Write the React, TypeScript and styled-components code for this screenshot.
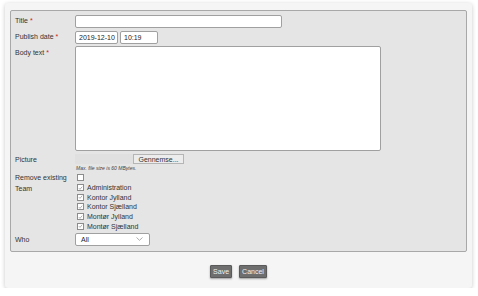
import styled, { createGlobalStyle } from "styled-components";

const GlobalStyle = createGlobalStyle`
  body {
    margin: 0;
    background: #ffffff;
    font-family: "Liberation Sans", Arial, sans-serif;
    color: #333333;
  }
`;

const teams = [
  "Administration",
  "Kontor Jylland",
  "Kontor Sjælland",
  "Montør Jylland",
  "Montør Sjælland",
];

const ChevronDown = () => (
  <svg width="7" height="4" viewBox="0 0 7 4">
    <path d="M0.5 0.5 L3.5 3.3 L6.5 0.5" fill="none" stroke="#999" strokeWidth="0.8" />
  </svg>
);

const CheckMark = () => (
  <svg width="6" height="6" viewBox="0 0 6 6">
    <path d="M1 3.2 L2.4 4.6 L5 1.4" fill="none" stroke="#8a8a8a" strokeWidth="0.8" />
  </svg>
);

const App = () => {
  return (
    <>
      <GlobalStyle />
      <Card>
        <Panel>
          <Label>
            Title <Req>*</Req>
          </Label>
          <TextInput width="207px" />

          <Label>
            Publish date <Req>*</Req>
          </Label>
          <Field>
            <TextInput width="43px" value="2019-12-10" readOnly />
            <TextInput width="38px" value="10:19" readOnly />
          </Field>

          <Label>
            Body text <Req>*</Req>
          </Label>
          <TextArea />

          <Label $pad="2px">Picture</Label>
          <FileCol>
            <FileRow>
              <FileName />
              <BrowseButton>Gennemse...</BrowseButton>
            </FileRow>
            <Hint>Max. file size is 60 MBytes.</Hint>
          </FileCol>

          <Label $pad="0px">Remove existing</Label>
          <Field>
            <CheckBox />
          </Field>

          <Label $pad="1px">Team</Label>
          <TeamList>
            {teams.map((t) => (
              <TeamItem key={t}>
                <CheckBox>
                  <CheckMark />
                </CheckBox>
                <span>{t}</span>
              </TeamItem>
            ))}
          </TeamList>

          <Label $pad="3px">Who</Label>
          <Select>
            <span>All</span>
            <ChevronDown />
          </Select>
        </Panel>
        <Actions>
          <ActionButton>Save</ActionButton>
          <ActionButton>Cancel</ActionButton>
        </Actions>
      </Card>
    </>
  );
};

const Card = styled.div`
  width: 467px;
  height: 285px;
  margin: 3px 0 0 5px;
  box-sizing: border-box;
  background: #f5f5f5;
  border-radius: 3px;
  box-shadow: 0 1px 4px rgba(0, 0, 0, 0.22);
  padding: 7px 5px 0 5px;
  display: flex;
  flex-direction: column;
`;

const Panel = styled.div`
  height: 242px;
  box-sizing: border-box;
  background: #e5e5e5;
  border: 1px solid #a8a8a8;
  border-radius: 2px;
  padding: 4px 4px 0 4px;
  display: grid;
  grid-template-columns: 60px 1fr;
  grid-auto-rows: min-content;
  row-gap: 3px;
  font-size: 7px;
`;

const Label = styled.div<{ $pad?: string }>`
  padding-top: ${({ $pad }) => $pad ?? "2px"};
  font-size: 7px;
  color: #333;
  white-space: nowrap;
`;

const Req = styled.span`
  color: #d42020;
`;

const Field = styled.div`
  display: flex;
  gap: 2px;
  align-items: center;
`;

const TextInput = styled.input<{ width: string }>`
  width: ${({ width }) => width};
  height: 13px;
  box-sizing: border-box;
  border: 1px solid #a0a0a0;
  border-radius: 2px;
  background: #fff;
  padding: 0 1px 0 3px;
  font-family: "Liberation Sans", Arial, sans-serif;
  font-size: 7px;
  color: #222;
  outline: none;
`;

const TextArea = styled.div`
  width: 306px;
  height: 105px;
  box-sizing: border-box;
  border: 1px solid #a0a0a0;
  border-radius: 2px;
  background: #fff;
  margin-top: -1px;
`;

const FileCol = styled.div`
  display: flex;
  flex-direction: column;
  gap: 1px;
`;

const FileRow = styled.div`
  display: flex;
  height: 10px;
`;

const FileName = styled.div`
  width: 58px;
  background: #e0e0e0;
`;

const BrowseButton = styled.div`
  width: 51px;
  box-sizing: border-box;
  border: 1px solid #b5b5b5;
  background: #ececec;
  font-size: 7px;
  color: #333;
  display: flex;
  align-items: center;
  justify-content: center;
`;

const Hint = styled.div`
  font-size: 5px;
  font-style: italic;
  color: #444;
  padding-left: 1px;
`;

const CheckBox = styled.div`
  width: 7px;
  height: 7px;
  box-sizing: border-box;
  border: 1px solid #8c8c8c;
  background: #fff;
  margin-left: 2px;
  display: flex;
  align-items: center;
  justify-content: center;
  flex-shrink: 0;
`;

const TeamList = styled.div`
  display: flex;
  flex-direction: column;
  gap: 2.7px;
`;

const TeamItem = styled.div`
  display: flex;
  align-items: center;
  gap: 3px;
  height: 7px;
  font-size: 7px;
  color: #333;
`;

const Select = styled.div`
  width: 75px;
  height: 13px;
  box-sizing: border-box;
  border: 1px solid #a0a0a0;
  border-radius: 2px;
  background: #fff;
  padding: 0 6px 0 5px;
  display: flex;
  align-items: center;
  justify-content: space-between;
  font-size: 7px;
  color: #222;
`;

const Actions = styled.div`
  display: flex;
  justify-content: center;
  gap: 7px;
  padding-top: 13px;
`;

const ActionButton = styled.div`
  height: 11px;
  padding: 0 2px;
  background: #6e6e6e;
  border: 1px solid #5a5a5a;
  border-radius: 1px;
  box-shadow: 0 1px 2px rgba(0, 0, 0, 0.35);
  color: #f0f0f0;
  font-size: 7px;
  display: flex;
  align-items: center;
`;

export default App;
